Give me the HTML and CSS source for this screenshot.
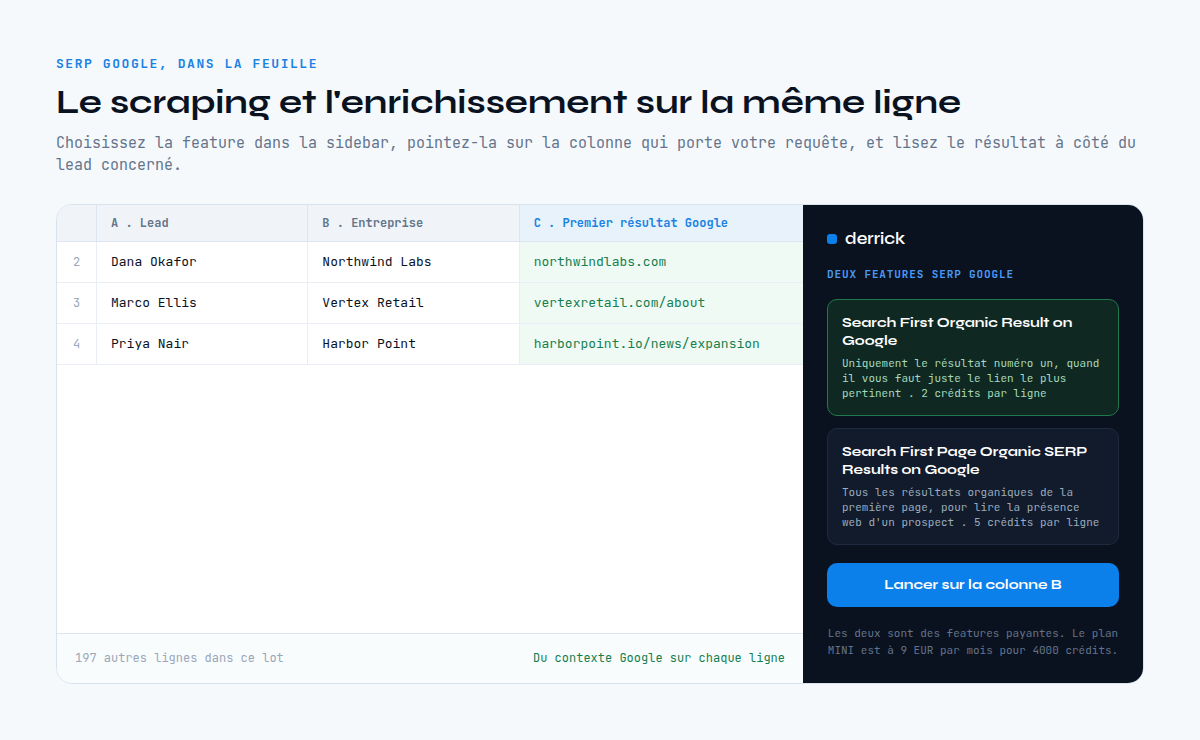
FILE: index.html
```html
<!DOCTYPE html>
<html lang="fr">
  <head>
    <meta charset="UTF-8" />
    <meta name="viewport" content="width=device-width, initial-scale=1.0" />
    <title>SERP Google, dans la feuille</title>
    <link rel="stylesheet" href="styles.css">
  </head>
  <body>
    <header class="intro">
      <p class="intro__eyebrow">SERP Google, dans la feuille</p>
      <h1 class="intro__title">Le scraping et l'enrichissement sur la même ligne</h1>
      <p class="intro__text">
        Choisissez la feature dans la sidebar, pointez-la sur la colonne qui
        porte votre requête, et lisez le résultat à côté du lead concerné.
      </p>
    </header>

    <main class="panel">
      <section class="sheet">
        <table class="grid">
          <colgroup>
            <col class="grid__col-index" />
            <col class="grid__col-text" />
            <col class="grid__col-text" />
            <col />
          </colgroup>
          <thead>
            <tr>
              <td></td>
              <th scope="col">A . Lead</th>
              <th scope="col">B . Entreprise</th>
              <th scope="col" class="grid__active">C . Premier résultat Google</th>
            </tr>
          </thead>
          <tbody>
            <tr>
              <th scope="row">2</th>
              <td>Dana Okafor</td>
              <td>Northwind Labs</td>
              <td class="grid__result">northwindlabs.com</td>
            </tr>
            <tr>
              <th scope="row">3</th>
              <td>Marco Ellis</td>
              <td>Vertex Retail</td>
              <td class="grid__result">vertexretail.com/about</td>
            </tr>
            <tr>
              <th scope="row">4</th>
              <td>Priya Nair</td>
              <td>Harbor Point</td>
              <td class="grid__result">harborpoint.io/news/expansion</td>
            </tr>
          </tbody>
        </table>
        <footer class="sheet__footer">
          <span>197 autres lignes dans ce lot</span>
          <span class="sheet__note">Du contexte Google sur chaque ligne</span>
        </footer>
      </section>

      <aside class="sidebar">
        <div class="brand">derrick</div>
        <h2 class="sidebar__label">Deux features SERP Google</h2>
        <div class="features">
          <article class="feature feature--active">
            <h3 class="feature__title">Search First Organic Result on Google</h3>
            <p class="feature__text">
              Uniquement le résultat numéro un, quand il vous faut juste le lien
              le plus pertinent . 2 crédits par ligne
            </p>
          </article>
          <article class="feature">
            <h3 class="feature__title">Search First Page Organic SERP Results on Google</h3>
            <p class="feature__text">
              Tous les résultats organiques de la première page, pour lire la
              présence web d'un prospect . 5 crédits par ligne
            </p>
          </article>
        </div>
        <button type="button" class="run">Lancer sur la colonne B</button>
        <p class="sidebar__note">
          Les deux sont des features payantes. Le plan MINI est à 9 EUR par mois
          pour 4000 crédits.
        </p>
      </aside>
    </main>
  </body>
</html>
```
FILE: styles.css
```css
:root {
  --ink: #0a121f;
  --muted: #64748b;
  --faint: #9aa7b8;
  --blue: #0b7fea;
  --green: #157f4f;
  --line: #d9e3ee;
  --line-soft: #e9eef4;
  --display: "Syne", "Inter", sans-serif;
  --mono: "JetBrains Mono", "DejaVu Sans Mono", monospace;
}
*,
*::before,
*::after {
  box-sizing: border-box;
}
body {
  display: flex;
  flex-direction: column;
  gap: 28px;
  min-height: 100vh;
  margin: 0;
  padding: 56px;
  color: var(--ink);
  background: #f5f9fc;
  font-family: var(--mono);
}
h1,
h2,
h3,
p {
  margin: 0;
}

/* Intro */
.intro__eyebrow {
  color: #1a82e2;
  font-size: 13px;
  font-weight: 600;
  line-height: 16px;
  letter-spacing: 0.12em;
  text-transform: uppercase;
}
.intro__title {
  margin: 10px 0;
  font-family: var(--display);
  font-size: 34px;
  font-weight: 700;
  line-height: 40px;
}
.intro__text {
  color: var(--muted);
  font-size: 15px;
  line-height: 22px;
}

/* Panel */
.panel {
  display: flex;
  flex: 1;
  border: 1px solid var(--line);
  border-radius: 16px;
  overflow: hidden;
  background: white;
}
.sheet {
  display: flex;
  flex: 1;
  flex-direction: column;
  justify-content: space-between;
  min-width: 0;
}
.grid {
  width: 100%;
  table-layout: fixed;
  border-collapse: separate;
  border-spacing: 0;
  font-size: 13px;
  line-height: 16px;
  text-align: left;
}
.grid__col-index {
  width: 40px;
}
.grid__col-text {
  width: 28.33%;
}
.grid th,
.grid td {
  padding: 12px 14px;
  border-right: 1px solid var(--line-soft);
  border-bottom: 1px solid var(--line-soft);
}
.grid th:last-child,
.grid td:last-child {
  border-right: 0;
}
.grid thead th,
.grid thead td {
  padding: 10px 14px;
  border-color: #dde6ef;
  color: var(--muted);
  background: #f0f4f8;
  font-size: 12px;
}
.grid tbody th {
  padding: 12px 0;
  color: var(--faint);
  font-size: 12px;
  font-weight: 400;
  text-align: center;
}
.grid thead .grid__active {
  color: #1a82e2;
  background: #e7f2fb;
}
.grid .grid__result {
  color: var(--green);
  background: #effaf4;
}
.sheet__footer {
  display: flex;
  justify-content: space-between;
  padding: 16px 18px;
  border-top: 1px solid #dde6ef;
  color: var(--faint);
  background: #f9fcfd;
  font-size: 12px;
  line-height: 17px;
}
.sheet__note {
  color: var(--green);
}

/* Sidebar */
.sidebar {
  display: flex;
  flex: 0 0 340px;
  flex-direction: column;
  gap: 18px;
  padding: 24px;
  background: var(--ink);
}
.brand {
  display: flex;
  align-items: center;
  gap: 8px;
  color: white;
  font-family: var(--display);
  font-size: 17px;
  font-weight: 600;
  line-height: 20px;
}
.brand::before {
  content: "";
  width: 10px;
  height: 10px;
  border-radius: 3px;
  background: var(--blue);
}
.sidebar__label {
  color: #4a9af5;
  font-size: 11px;
  font-weight: 600;
  line-height: 14px;
  letter-spacing: 0.08em;
  text-transform: uppercase;
}
.features {
  display: flex;
  flex-direction: column;
  gap: 12px;
}
.feature {
  padding: 14px;
  border: 1px solid #1e2b3f;
  border-radius: 10px;
  color: #9cabbd;
  background: #111b2c;
}
.feature--active {
  border-color: #22784f;
  color: #a7d9bd;
  background: #0f2922;
}
.feature__title {
  margin-bottom: 6px;
  color: white;
  font-family: var(--display);
  font-size: 14px;
  font-weight: 700;
  line-height: 18px;
}
.feature__text {
  font-size: 11px;
  line-height: 15px;
}
.run {
  padding: 13px;
  border: 0;
  border-radius: 10px;
  color: white;
  background: var(--blue);
  font-family: var(--display);
  font-size: 14px;
  font-weight: 700;
  line-height: 18px;
  cursor: pointer;
}
.sidebar__note {
  color: #64748b;
  font-size: 11px;
  line-height: 17px;
  text-align: center;
}
```
